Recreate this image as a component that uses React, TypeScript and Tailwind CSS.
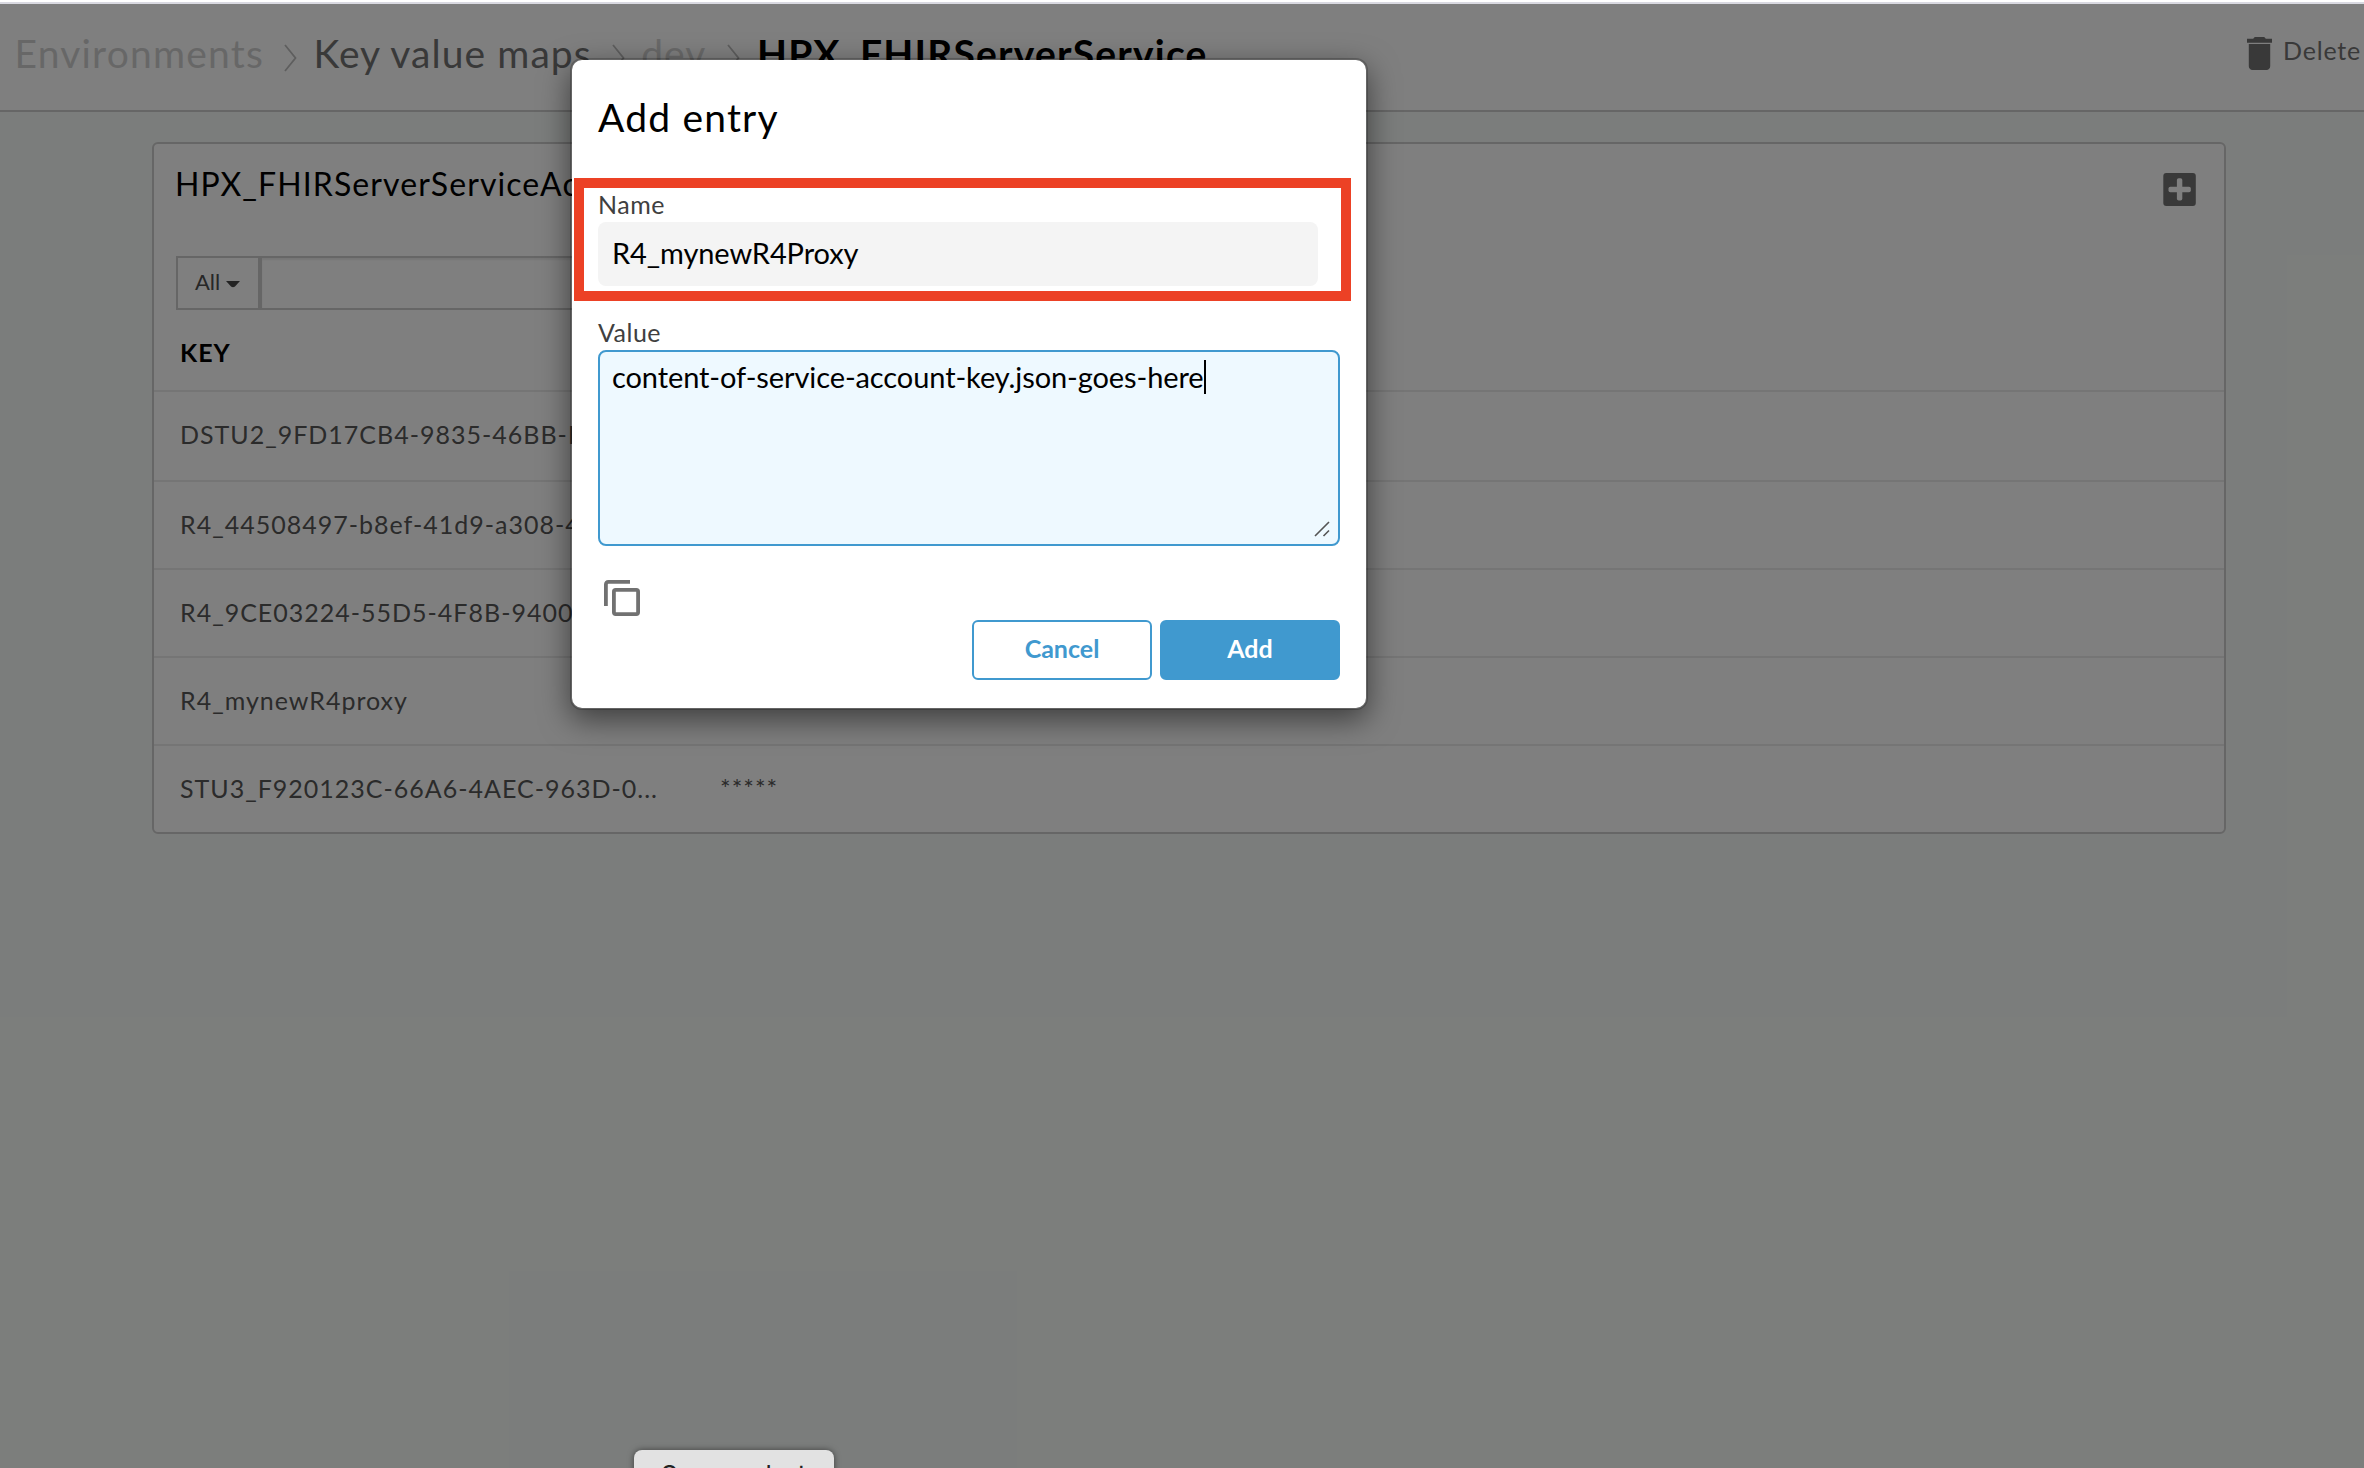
import type { ReactNode } from 'react';

const ENTRIES = [
  { key: 'DSTU2_9FD17CB4-9835-46BB-B...', value: '*****', height: 'h-[90px] pb-[5px]' },
  { key: 'R4_44508497-b8ef-41d9-a308-4...', value: '*****', height: 'h-[88px] pb-[3px]' },
  { key: 'R4_9CE03224-55D5-4F8B-9400-...', value: '*****', height: 'h-[88px] pb-[3px]' },
  { key: 'R4_mynewR4proxy', value: '*****', height: 'h-[88px] pb-[3px]' },
  { key: 'STU3_F920123C-66A6-4AEC-963D-0...', value: '*****', height: 'h-[86px] pb-[3px]' },
];

function Chevron() {
  return (
    <svg className="ml-[20px] mr-[16.5px] mt-[9px] h-[28px] w-[13px] shrink-0" viewBox="0 0 13 28" fill="none">
      <path d="M1 1L11.5 14L1 27" stroke="#bdbdbd" strokeWidth="1.8" />
    </svg>
  );
}

function TrashIcon() {
  return (
    <svg className="h-[33px] w-[25px]" viewBox="5 3 14 18" preserveAspectRatio="none" fill="#727272">
      <path d="M6 19c0 1.1.9 2 2 2h8c1.1 0 2-.9 2-2V6.8H6V19zM19 4h-3.5c-.4-.7-.7-1-1.3-1h-4.400c-.6 0-.9.3-1.3 1H5v2.200h14V4z" />
    </svg>
  );
}

function PlusSquareIcon() {
  return (
    <svg className="h-[33px] w-[33px]" viewBox="0 0 33 33">
      <rect x="0.3" y="0" width="32.5" height="33" rx="3" fill="#727272" />
      <rect x="5.5" y="13.8" width="22.3" height="5.4" rx="1.8" fill="#fff" />
      <rect x="13.9" y="5.3" width="5.4" height="22.3" rx="1.8" fill="#fff" />
    </svg>
  );
}

function CopyIcon() {
  return (
    <svg className="h-[36px] w-[36px]" viewBox="0 0 36 36" fill="none" stroke="#717171" strokeWidth="3.8">
      <path d="M26 1.9H4.4Q1.9 1.9 1.9 4.4V26" />
      <rect x="9.9" y="9.9" width="24.2" height="24.2" rx="1.8" />
    </svg>
  );
}

function Header() {
  return (
    <header className="flex h-[108px] items-start justify-between border-b-2 border-[#ccc] bg-white">
      <nav className="flex h-[98px] items-center whitespace-nowrap pl-[14.5px] text-[39px] leading-[48px]">
        <span className="tracking-[1.2px] text-[#cfcfcf]">Environments</span>
        <Chevron />
        <span className="tracking-[1.05px] text-[#737373]">Key value maps</span>
        <Chevron />
        <span className="tracking-[1.1px] text-[#d3d3d3]">dev</span>
        <Chevron />
        <span className="ml-px font-bold tracking-[1.2px] text-black">HPX_FHIRServerService</span>
      </nav>
      <button className="mr-[3px] flex h-[98px] items-center gap-[11px] text-[25px] leading-[30px] tracking-[0.8px] text-[#727272]">
        <TrashIcon />
        <span className="-mt-[6px]">Delete</span>
      </button>
    </header>
  );
}

function SearchBar() {
  return (
    <div className="mt-[50px] flex h-[54px] w-[900px] border-2 border-[#ccc]">
      <button className="flex w-[84px] shrink-0 items-center gap-[6px] border-r-4 border-[#ccc] pb-[3px] pl-[17px] text-[22px] text-[#4e4e4e]">
        All
        <svg className="mt-[5px] h-[7px] w-[14px]" viewBox="0 0 14 7" fill="#464646">
          <path d="M0 0H14L9 5.5Q7 7 5 5.5Z" />
        </svg>
      </button>
      <div className="flex-1 shadow-[inset_0_2px_2px_rgba(0,0,0,0.075)]" />
    </div>
  );
}

function EntriesCard() {
  return (
    <section className="ml-[152px] mt-[30px] h-[692px] w-[2074px] overflow-hidden rounded-[6px] border-2 border-[#ccc] bg-white">
      <div className="px-[22px]">
        <div className="flex items-start justify-between pr-[6px] pt-[20px]">
          <h2 className="-ml-px text-[32px] leading-[40px] tracking-[1.09px] text-black">HPX_FHIRServerServiceAccounts</h2>
          <div className="mt-[9px] h-[33px]">
            <PlusSquareIcon />
          </div>
        </div>
        <SearchBar />
      </div>
      <div className="flex h-[82px] items-center border-b-2 border-[#eaeaea] pl-[26px] pt-[5px] text-[25px] font-bold tracking-[1px] text-black">
        KEY
      </div>
      {ENTRIES.map((entry) => (
        <div
          key={entry.key}
          className={`flex items-center border-b-2 border-[#eaeaea] pl-[26px] text-[25px] leading-[30px] tracking-[1px] text-[#565656] last:border-b-0 ${entry.height}`}
        >
          <span className="w-[540px] shrink-0">{entry.key}</span>
          <span className="pt-px">{entry.value}</span>
        </div>
      ))}
    </section>
  );
}

function Label({ children }: { children: ReactNode }) {
  return <div className="h-[30px] text-[25px] leading-[30px] tracking-[0.5px] text-[#404040]">{children}</div>;
}

function AddEntryDialog() {
  return (
    <div className="absolute left-[570px] top-[58px] flex h-[652px] w-[798px] flex-col rounded-[12px] border-2 border-black/20 bg-white bg-clip-padding px-[26px] shadow-[0_10px_30px_rgba(0,0,0,0.5)]">
      <h1 className="mt-[33px] text-[39px] leading-[48px] tracking-[1.2px] text-black">Add entry</h1>
      <div className="mt-[48px]">
        <Label>Name</Label>
        <div className="mt-[3px] h-[64px] w-[720px] rounded-[8px] bg-[#f4f4f4] pl-[14px] text-[29px] leading-[62px] tracking-[-0.1px] text-black">
          R4_mynewR4Proxy
        </div>
      </div>
      <div className="mt-[31px]">
        <Label>Value</Label>
        <div className="mt-[3px] flex h-[196px] items-start justify-between rounded-[8px] border-2 border-[#4099cf] bg-[#eef9ff] pl-[12px]">
          <div className="flex items-start pt-[8px] text-[29px] leading-[34px] tracking-[-0.1px] text-black">
            content-of-service-account-key.json-goes-here
            <span className="h-[34px] w-[2px] bg-black" />
          </div>
          <svg className="mb-[7px] mr-[8px] h-[16px] w-[16px] self-end" viewBox="0 0 16 16" stroke="#555" strokeWidth="1.6">
            <path d="M1 15L15 1M9.5 15L15 9.5" />
          </svg>
        </div>
      </div>
      <div className="ml-[6px] mt-[34px] h-[36px]">
        <CopyIcon />
      </div>
      <div className="mt-[4px] flex justify-end gap-[8px] text-[25px] font-bold leading-[53px]">
        <button className="h-[60px] w-[180px] rounded-[6px] border-2 border-[#4099cf] bg-white pb-[3px] text-[#4099cf]">
          Cancel
        </button>
        <button className="h-[60px] w-[180px] rounded-[6px] border-2 border-[#4099cf] bg-[#4099cf] pb-[3px] text-white">
          Add
        </button>
      </div>
      <div className="absolute left-[2px] top-[118px] h-[123px] w-[777px] border-[10px] border-[#ec4125]" />
    </div>
  );
}

export default function App() {
  return (
    <div className="relative h-[1468px] w-[2364px] overflow-hidden bg-white pt-[2px] font-['Lato',sans-serif]">
      <div className="h-[2px] bg-[#d9d9e1]" />
      <div className="h-[1464px] bg-[#f7fbf8]">
        <Header />
        <EntriesCard />
      </div>
      <div className="absolute inset-x-0 bottom-0 top-[4px] bg-black/50" />
      <AddEntryDialog />
      <div className="absolute left-[634px] top-[1450px] h-[48px] w-[200px] rounded-[8px] bg-[#e2e2e2] pt-[10px] text-center font-['Inter',sans-serif] text-[26px] leading-[30px] tracking-[0.6px] text-[#222] shadow-[0_0_6px_rgba(0,0,0,0.5)]">
        Screenshot
      </div>
    </div>
  );
}
